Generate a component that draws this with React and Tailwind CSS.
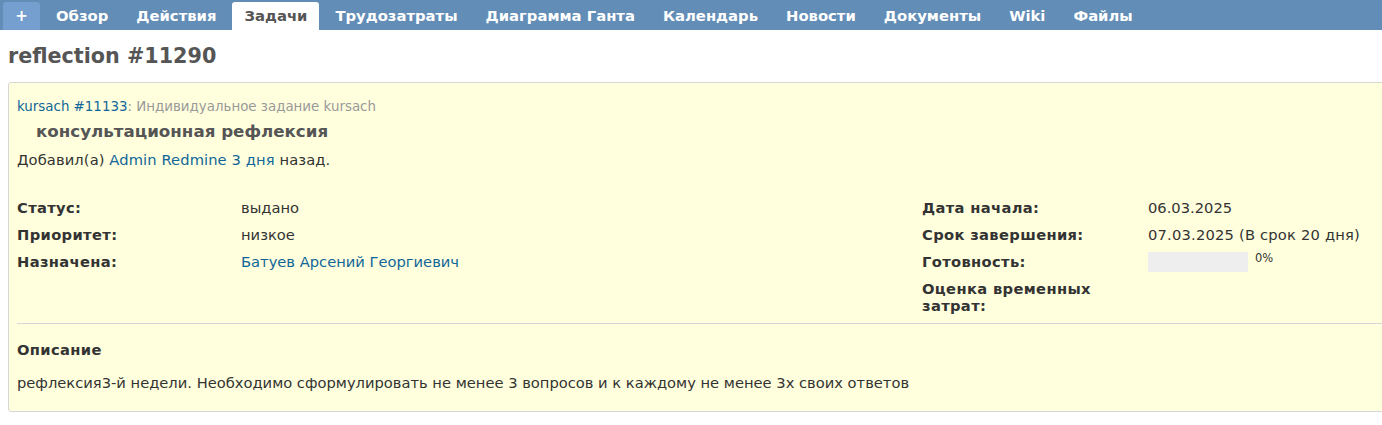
export default function App() {
  const tabs = ["Обзор", "Действия", "Задачи", "Трудозатраты", "Диаграмма Ганта", "Календарь", "Новости", "Документы", "Wiki", "Файлы"];
  const font = { fontFamily: '"DejaVu Sans", Verdana, sans-serif' };
  const lbl = "font-bold tracking-[0.35px]";
  return (
    <div className="w-[1382px] h-[425px] overflow-hidden bg-white text-[#333]" style={font}>
      <div className="h-[30px] bg-[#628db6] flex items-end pl-[3px] gap-1">
        <div className="h-[28px] w-[37px] rounded-t-[3px] bg-[#759fcf] text-white font-bold text-[15px] flex items-center justify-center">+</div>
        {tabs.map((t) => (
          <div
            key={t}
            className={
              t === "Задачи"
                ? "h-[28px] px-3 rounded-t-[3px] bg-white text-[#555] font-bold text-[14.8px] flex items-center"
                : "h-[28px] px-3 text-white font-bold text-[14.8px] flex items-center"
            }
          >
            {t}
          </div>
        ))}
      </div>
      <h2 className="ml-2 mt-[13px] text-[20.7px] leading-[26px] font-bold text-[#555]">reflection #11290</h2>
      <div className="ml-2 mt-[13px] w-[1820px] border border-[#d7d7d7] rounded-[3px] bg-[#ffffdd] px-2 pt-[15px] pb-[20px]">
        <div className="text-[13.4px] leading-[17px]">
          <span className="text-[#116699]">kursach #11133</span>
          <span className="text-[#999]">: Индивидуальное задание kursach</span>
        </div>
        <div className="ml-[19px] mt-[6px] text-[16.7px] leading-[20px] font-bold text-[#555]">консультационная рефлексия</div>
        <div className="mt-[10px] text-[14.7px] leading-[17px] tracking-[0.1px]">
          Добавил(а) <span className="text-[#116699]">Admin Redmine</span> <span className="text-[#116699]">3 дня</span> назад.
        </div>
        <div className="mt-[26px] grid grid-cols-[905px_1fr] text-[14.7px] leading-[17px]">
          <div className="flex flex-col">
            {[
              ["Статус:", "выдано"],
              ["Приоритет:", "низкое"],
              ["Назначена:", <span className="text-[#116699]">Батуев Арсений Георгиевич</span>],
            ].map(([l, v], i) => (
              <div key={i} className="flex py-[5px]">
                <div className={"w-[224px] " + lbl}>{l}</div>
                <div>{v}</div>
              </div>
            ))}
          </div>
          <div className="flex flex-col">
            <div className="flex py-[5px]">
              <div className={"w-[226px] " + lbl}>Дата начала:</div>
              <div>06.03.2025</div>
            </div>
            <div className="flex py-[5px]">
              <div className={"w-[226px] " + lbl}>Срок завершения:</div>
              <div className="tracking-[0.2px]">07.03.2025 (В срок 20 дня)</div>
            </div>
            <div className="flex py-[5px]">
              <div className={"w-[226px] " + lbl}>Готовность:</div>
              <div className="flex items-start gap-[7px] h-[17px]">
                <div className="w-[100px] h-[20px] bg-[#eeeeee] -mt-[1px]"></div>
                <span className="text-[11.5px] leading-[13px] -mt-[1px]">0%</span>
              </div>
            </div>
            <div className="flex py-[5px]">
              <div className={"w-[185px] " + lbl}>Оценка временных затрат:</div>
            </div>
          </div>
        </div>
        <div className="mt-[4px] border-t border-[#d7d7d7]"></div>
        <div className="mt-[17px] text-[14.7px] leading-[17px] font-bold tracking-[0.35px]">Описание</div>
        <div className="mt-[16px] text-[14.7px] leading-[17px]">
          рефлексия3-й недели. Необходимо сформулировать не менее 3 вопросов и к каждому не менее 3х своих ответов
        </div>
      </div>
    </div>
  );
}
